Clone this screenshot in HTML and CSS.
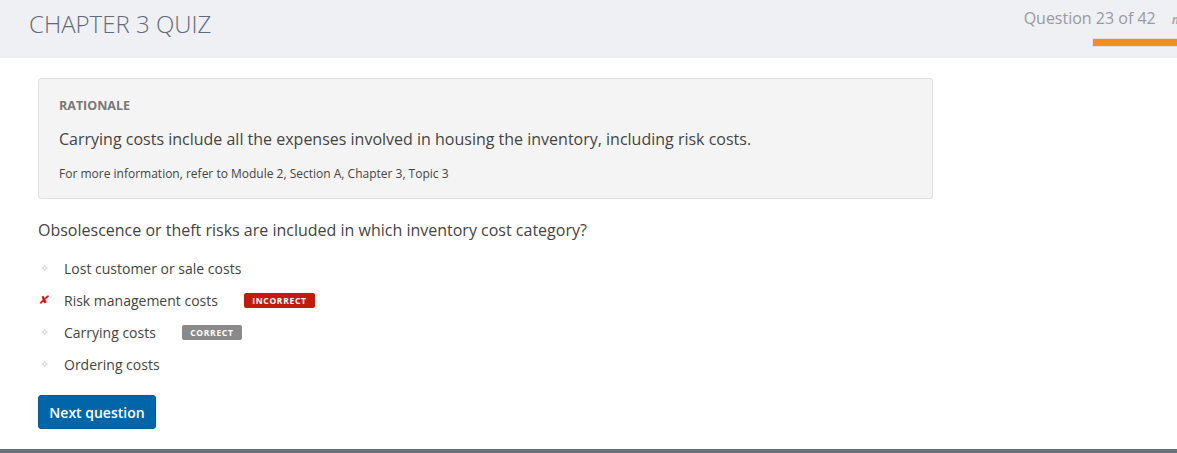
FILE: index.html
```html
<!DOCTYPE html>
<html>
<head>
<meta charset="utf-8">
<link rel="stylesheet" href="styles.css">
</head>
<body>
<header class="topbar">
  <h1 class="title">CHAPTER 3 QUIZ</h1>
  <div class="progress">
    <div class="progress-text">Question 23 of 42<span class="more">n</span></div>
    <div class="progress-bar"></div>
  </div>
</header>
<main class="content">
  <section class="rationale">
    <div class="rationale-label">RATIONALE</div>
    <p class="rationale-text">Carrying costs include all the expenses involved in housing the inventory, including risk costs.</p>
    <p class="rationale-ref">For more information, refer to Module 2, Section A, Chapter 3, Topic 3</p>
  </section>
  <p class="question">Obsolescence or theft risks are included in which inventory cost category?</p>
  <ul class="options">
    <li class="option"><span class="mark dot">&#10023;</span><span class="opt-text">Lost customer or sale costs</span></li>
    <li class="option"><span class="mark cross">&#10008;</span><span class="opt-text">Risk management costs</span><span class="badge badge-wrong">INCORRECT</span></li>
    <li class="option"><span class="mark dot">&#10023;</span><span class="opt-text">Carrying costs</span><span class="badge badge-right">CORRECT</span></li>
    <li class="option"><span class="mark dot">&#10023;</span><span class="opt-text">Ordering costs</span></li>
  </ul>
  <button class="next-btn">Next question</button>
</main>
<footer class="bottom-bar"></footer>
</body>
</html>
```

FILE: styles.css
```css
html, body {
  margin: 0;
  padding: 0;
}
body {
  font-family: "Open Sans", "Liberation Sans", sans-serif;
  color: #444;
  background: #fff;
  width: 1177px;
  height: 453px;
  overflow: hidden;
  display: flex;
  flex-direction: column;
}
.topbar {
  height: 58px;
  background: #eff0f4;
  display: flex;
  justify-content: space-between;
  align-items: flex-start;
  flex-shrink: 0;
}
.title {
  margin: 8px 0 0 29px;
  font-weight: 300;
  font-size: 24px;
  line-height: 32px;
  color: #5f6b78;
}
.progress {
  display: flex;
  flex-direction: column;
  align-items: flex-end;
  padding-top: 6px;
}
.progress-text {
  font-size: 16px;
  line-height: 24px;
  color: #9a9a9a;
  white-space: nowrap;
  display: flex;
  align-items: baseline;
  margin-right: -2px;
}
.more {
  font-style: italic;
  font-weight: 700;
  font-size: 12px;
  color: #aaa;
  margin-left: 16px;
}
.progress-bar {
  width: 84px;
  height: 7px;
  margin-top: 7px;
  background: #f18e1c;
  box-shadow: 0 0 0 1px #e7e0d6;
}
.content {
  flex: 1;
  padding: 20px 0 0 38px;
}
.rationale {
  width: 853px;
  height: 99px;
  padding: 10px 20px 10px 20px;
  background: #f4f4f4;
  border: 1px solid #e0e0e0;
  border-radius: 3px;
}
.rationale-label {
  font-size: 12.5px;
  font-weight: 700;
  color: #777;
  line-height: 17px;
  margin-top: 8px;
}
.rationale-text {
  margin: 14px 0 0;
  font-size: 16px;
  line-height: 22px;
  color: #444;
}
.rationale-ref {
  margin: 16px 0 0;
  font-size: 12px;
  line-height: 16px;
  color: #444;
}
.question {
  margin: 19px 0 0;
  font-size: 16px;
  line-height: 24px;
  color: #444;
}
.options {
  list-style: none;
  margin: 10px 0 0;
  padding: 0;
}
.option {
  height: 32px;
  display: flex;
  align-items: center;
  font-size: 14px;
  color: #444;
}
.mark {
  width: 26px;
  display: inline-flex;
  justify-content: flex-start;
  box-sizing: border-box;
}
.dot {
  color: #bdbdbd;
  font-size: 11px;
  padding-left: 2px;
  font-family: "DejaVu Sans", sans-serif;
}
.cross {
  color: #e0101a;
  font-size: 12px;
  padding-left: 1px;
  font-family: "DejaVu Sans", sans-serif;
  transform: skewX(-12deg);
}
.badge {
  display: inline-block;
  font-size: 8.5px;
  font-weight: 700;
  letter-spacing: 0.7px;
  color: #fff;
  line-height: 15px;
  height: 15px;
  border-radius: 2px;
  text-align: center;
  margin-left: 26px;
}
.badge-wrong {
  background: #c41a0b;
  width: 71px;
}
.badge-right {
  background: #8a8a8a;
  width: 60px;
}
.next-btn {
  margin-top: 15px;
  width: 118px;
  height: 34px;
  background: #0066aa;
  border: 1px solid #005a96;
  border-radius: 3px;
  color: #fff;
  font-family: "Open Sans", "Liberation Sans", sans-serif;
  font-size: 14px;
  font-weight: 600;
  padding: 0;
}
.bottom-bar {
  height: 4px;
  background: #68737c;
  flex-shrink: 0;
}
```
